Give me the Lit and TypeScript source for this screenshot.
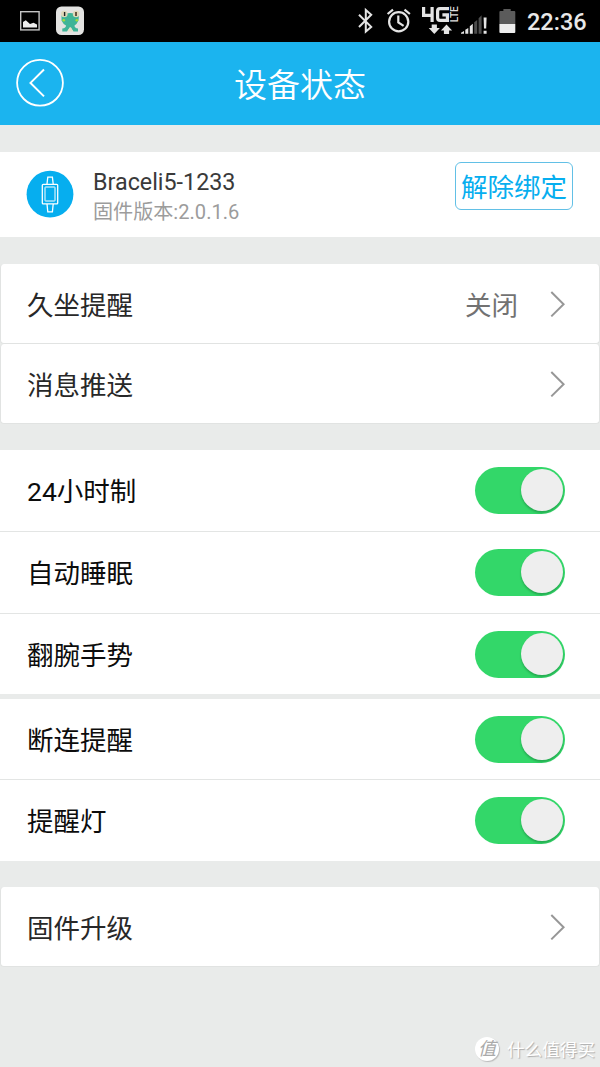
import { LitElement, html, css } from "lit";
import { customElement, property } from "lit/decorators.js";

@customElement("status-bar")
class StatusBar extends LitElement {
  static styles = css`
    :host { display: block; height: 42px; background: #000; }
    .row { display: flex; justify-content: space-between; height: 42px; }
    svg { display: block; flex: none; }
    .right { display: flex; }
    .lte { font: 500 10.5px "Roboto", sans-serif; }
    .time {
      width: 73px; padding-top: 1px; color: #e8e8e8;
      font: 500 23.5px/42px "Roboto", sans-serif; white-space: nowrap;
    }
  `;
  render() {
    return html`<div class="row">
      <svg width="100" height="42" viewBox="0 0 100 42">
        <rect x="20.7" y="11.7" width="18.4" height="18.2" fill="none" stroke="#c4c4c4" stroke-width="1.4"/>
        <path d="M23 27.5v-5.6l2.8-1.6 4.2 3.7 3.5-1.3 3.5 1.8v3z" fill="#eee"/>
        <rect x="56" y="6.5" width="28" height="28.5" rx="5.5" fill="#e3e3e1"/>
        <path d="M61.5 15Q70 11 79 15L78.5 20.5Q77 24 74.5 25.5Q74.5 28 78 28.5V31.5H73.5L71 28H69.5L67 31.5H62.3V28.5Q66 28 66 25.5Q63 24 61.5 20.5Z" fill="#3fb497"/>
        <path d="M67.3 31.5l2.4-4.3h1.2l2.3 4.3z" fill="#e3dfc5"/>
        <circle cx="64.3" cy="14" r="3.3" fill="#dfd9ba"/><circle cx="76.1" cy="14" r="3.3" fill="#dfd9ba"/>
        <rect x="63.9" y="12" width="1.4" height="4" fill="#222"/><rect x="75" y="12" width="2" height="4" fill="#665744"/>
        <circle cx="63.8" cy="20.2" r="1.3" fill="#a8dd35"/><circle cx="76.8" cy="20.2" r="1.3" fill="#a8dd35"/>
      </svg>
      <div class="right">
        <svg width="172" height="42" viewBox="355 0 172 42">
          <path d="M359 14.7l12.2 12.2-5.4 4.6V10l5.4 4.8L359 27" fill="none" stroke="#e4e4e4" stroke-width="2"/>
          <g fill="none" stroke="#e4e4e4" stroke-width="2.2">
            <circle cx="398.7" cy="21.8" r="9.6"/>
            <path d="M398.3 15.5v6.8l5.3 3.6M387.6 14l5.4-4.4M404.5 9.6l5.4 4.4"/>
          </g>
          <g fill="none" stroke="#e4e4e4" stroke-width="3.2">
            <path d="M423.6 7v8.4h8.6M432.1 7v15"/>
            <path d="M449 8.6h-9q-2.4 0-2.4 2.4v7q0 2.4 2.4 2.4h7.4v-5.6h-5"/>
          </g>
          <text class="lte" fill="#ddd" transform="translate(458.3 22.3) rotate(-90)" textLength="16" lengthAdjust="spacingAndGlyphs">LTE</text>
          <path d="M431.7 24.5h5.2v3.5h3l-5.6 6-5.6-6h3zM443.9 34h5.2v-3.5h3l-5.6-6-5.6 6h3z" fill="#e4e4e4"/>
          <path d="M461 33.7v-1l3-1.6v2.6zM465.3 33.7v-4l3-1.7v5.7zM469.8 33.7v-7.5l3-2.4v9.9z" fill="#e4e4e4"/>
          <path d="M474.2 33.7V22.3l3-2.4v13.8zM478.6 33.7V18.2l3-3v18.5z" fill="#4c4c4c"/>
          <path d="M483.6 17.5h3l-.4 11h-2.2zM483.6 30.8h3v2.9h-3z" fill="#e4e4e4"/>
          <path d="M499.4 24V12q0-1 1-1h3V9h7.3v2h3.6q1 0 1 1v12z" fill="#5b5b5b"/>
          <path d="M499.4 24h15.9v8q0 1-1 1h-13.9q-1 0-1-1z" fill="#ededed"/>
        </svg>
        <div class="time">22:36</div>
      </div>
    </div>`;
  }
}

@customElement("toggle-switch")
class ToggleSwitch extends LitElement {
  static styles = css`
    :host { display: block; }
    .track {
      display: flex; justify-content: flex-end; align-items: center; box-sizing: border-box;
      width: 90px; height: 47px; padding: 0 2.5px 1px 0; border-radius: 24px; background: #33d769;
    }
    .knob { width: 42px; height: 42px; border-radius: 50%; background: #eee; box-shadow: 0 2px 2px rgba(0, 60, 20, .28); }
  `;
  render() {
    return html`<div class="track"><div class="knob"></div></div>`;
  }
}

@customElement("nav-row")
class NavRow extends LitElement {
  @property() label = "";
  @property() value = "";
  static styles = css`
    :host { display: block; }
    .row {
      display: flex; align-items: center; box-sizing: border-box; height: 80px;
      padding: 0 34px 0 26px; background: #fff;
      border: 1px solid #e1e3e2; border-top: 0; border-radius: 4px;
    }
    .label { flex: 1; color: #282828; padding-top: 5px; }
    .value { color: #727272; margin-right: 32px; padding-top: 5px; }
    svg { display: block; }
  `;
  render() {
    return html`<div class="row">
      <span class="label">${this.label}</span>
      <span class="value">${this.value}</span>
      <svg width="15" height="28" viewBox="0 0 15 28"><path d="M1.3 2l12.3 12.2L1.3 26.4" fill="none" stroke="#979797" stroke-width="2"/></svg>
    </div>`;
  }
}

@customElement("app-root")
class AppRoot extends LitElement {
  static styles = css`
    :host {
      display: block; width: 600px; height: 1067px; overflow: hidden; background: #e9ebea;
      font-family: "Roboto", "Noto Sans CJK SC", sans-serif; font-size: 26.5px; line-height: 40px;
    }
    .page { display: flex; flex-direction: column; height: 1067px; }
    .header {
      display: grid; grid-template-columns: 48px 1fr 48px; align-items: center; height: 83px;
      padding: 0 16px; background: #1bb4ef; color: #fff; box-sizing: border-box;
    }
    .title { text-align: center; font-size: 33px; line-height: 48px; padding-top: 4px; font-weight: 350; }
    svg { display: block; flex: none; }
    .back { margin-bottom: 1px; }
    .device {
      display: flex; height: 85px; margin-top: 27px; background: #fff;
      padding: 0 27px 0 26px; box-sizing: border-box;
    }
    .watch { margin-top: 18px; }
    .info { flex: 1; margin-left: 19px; padding-top: 15px; }
    .name { font-size: 23.3px; line-height: 30px; color: #3a3a3a; }
    .version { font-size: 20.1px; line-height: 30px; color: #9c9c9c; }
    .unbind {
      width: 118px; height: 48px; margin: 10px 0 0; padding: 3px 0 0; box-sizing: border-box;
      border: 1.5px solid #62c0e6; border-radius: 6px; background: #fff; color: #06aeef;
      font: inherit; line-height: 43px; white-space: nowrap;
    }
    .nav { margin-top: 27px; }
    .upgrade { margin-top: 26px; }
    .switches { margin-top: 26px; }
    .more { margin-top: 5px; }
    .item {
      display: flex; align-items: center; justify-content: space-between; box-sizing: border-box;
      height: 81px; padding: 0 35px 0 27px; background: #fff; color: #0c0c0c;
    }
    .item span { padding-top: 3px; }
    .item + .item { border-top: 1px solid #e3e5e4; height: 82px; }
    .item + .item + .item { height: 81px; }
    .more .item:first-child { height: 80px; }
    .watermark { display: flex; align-items: center; justify-content: flex-end; margin-top: auto; height: 36px; padding-right: 5px; gap: 8px; }
    .seal {
      width: 24px; height: 24px; border-radius: 50%; background: #fff; color: #aaa; text-align: center;
      font-size: 18px; line-height: 24px; font-style: italic; box-shadow: 1px 1px 1px #bbb;
    }
    .brand { font-size: 17.6px; line-height: 26px; padding-top: 1px; color: #fff; text-shadow: 1px 1px 1px #aaa; }
  `;
  render() {
    const item = (label: string) => html`<div class="item"><span>${label}</span><toggle-switch></toggle-switch></div>`;
    return html`<div class="page">
      <status-bar></status-bar>
      <div class="header">
        <svg class="back" width="48" height="48" viewBox="0 0 48 48" fill="none" stroke="#fff">
          <circle cx="24" cy="23.8" r="22.9" stroke-width="1.8"/>
          <path d="M28 10.5L14.5 23.9 28 37.4" stroke-width="2"/>
        </svg>
        <div class="title">设备状态</div>
      </div>
      <div class="device">
        <svg class="watch" width="48" height="48" viewBox="0 0 48 48">
          <circle cx="24" cy="24.2" r="23.4" fill="#06aeef"/>
          <g fill="none" stroke="#fff" stroke-width="1.3">
            <rect x="16.3" y="14.3" width="15.4" height="19.6" rx="1"/>
            <rect x="19" y="17" width="10" height="14" rx=".5" stroke-width="1"/>
            <path d="M21 14l.8-6.8h4.6l.8 6.8M21 34l.8 7.8h4.6l.8-7.8"/>
          </g>
        </svg>
        <div class="info">
          <div class="name">Braceli5-1233</div>
          <div class="version">固件版本:2.0.1.6</div>
        </div>
        <button class="unbind">解除绑定</button>
      </div>
      <div class="nav">
        <nav-row label="久坐提醒" value="关闭"></nav-row>
        <nav-row label="消息推送"></nav-row>
      </div>
      <div class="switches">${["24小时制", "自动睡眠", "翻腕手势"].map(item)}</div>
      <div class="more">${["断连提醒", "提醒灯"].map(item)}</div>
      <div class="upgrade"><nav-row label="固件升级"></nav-row></div>
      <div class="watermark"><span class="seal">值</span><span class="brand">什么值得买</span></div>
    </div>`;
  }
}
